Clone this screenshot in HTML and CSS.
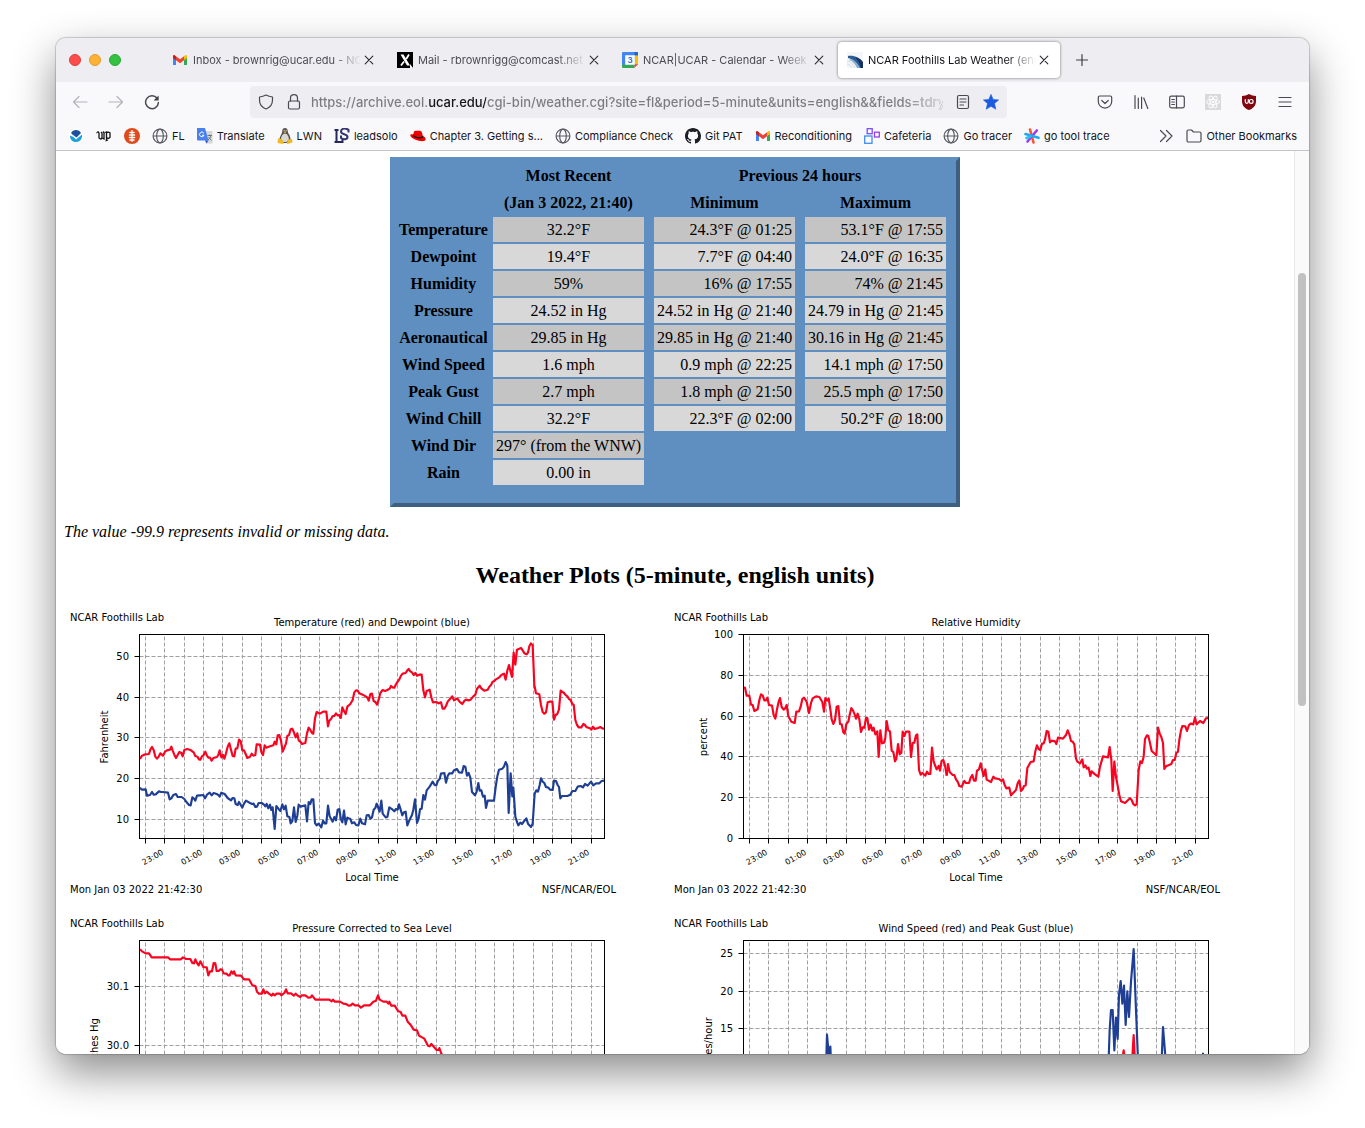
FILE: index.html
```html
<!DOCTYPE html>
<html lang="en">

<head>
    <meta charset="UTF-8" />
    <meta name="viewport" content="width=device-width, initial-scale=1.0" />
    <title>NCAR Foothills Lab Weather (english)</title>
    <link rel="stylesheet" href="styles.css">
</head>

<body>
    <!-- Icons used more than once -->
    <svg class="sprite" aria-hidden="true">
        <symbol id="gmail" viewBox="0 0 16 16">
            <path d="M1 4v9h3V7z" fill="#4285f4" />
            <path d="M15 4v9h-3V7z" fill="#34a853" />
            <path d="M12 4.2l1.2-1C14 2.6 15 3.2 15 4.2V6l-3 2.3z" fill="#fbbc04" />
            <path d="M4 4.2l-1.2-1C2 2.6 1 3.2 1 4.2V6l3 2.3z" fill="#c5221f" />
            <path d="M4 4.2l4 3 4-3v4.1l-4 3-4-3z" fill="#ea4335" />
        </symbol>
        <symbol id="globe" viewBox="0 0 16 16">
            <g fill="none" stroke="#5b5b66" stroke-width="1.2">
                <circle cx="8" cy="8" r="6.9" />
                <ellipse cx="8" cy="8" rx="3.3" ry="6.9" />
                <path d="M1 8h14" />
            </g>
        </symbol>
        <symbol id="close" viewBox="0 0 16 16">
            <path d="M4.2 4.2l7.6 7.6M11.8 4.2l-7.6 7.6" stroke="#2b2a33" stroke-width="1.1" stroke-linecap="round" />
        </symbol>
    </svg>

    <div class="window">
        <div class="tab-strip">
            <div class="lights">
                <span class="light red"></span>
                <span class="light yellow"></span>
                <span class="light green"></span>
            </div>
            <div class="tab">
                <svg class="icon"><use href="#gmail" /></svg>
                <span class="tab-title">Inbox - brownrig@ucar.edu - NCAR</span>
                <button class="tab-close" aria-label="Close tab"><svg class="icon"><use href="#close" /></svg></button>
            </div>
            <div class="tab">
                <svg class="icon" viewBox="0 0 16 16">
                    <path d="M0 0h16v16H0z" />
                    <path d="M3.5 2.5h3L13 13.5h-3z" fill="#fff" />
                    <path d="M12 2.5L9.2 7M7 9.5L4 13.5" stroke="#fff" stroke-width="1.8" />
                    <path d="M13 12l3 4h-3z" fill="#fff" />
                </svg>
                <span class="tab-title">Mail - rbrownrigg@comcast.net</span>
                <button class="tab-close" aria-label="Close tab"><svg class="icon"><use href="#close" /></svg></button>
            </div>
            <div class="tab">
                <svg class="icon" viewBox="0 0 16 16">
                    <path d="M1 0h14a1 1 0 0 1 1 1v12H0V1a1 1 0 0 1 1-1z" fill="#4285f4" />
                    <path d="M12.500 0H15a1 1 0 0 1 1 1v2.500h-3.500z" fill="#1967d2" />
                    <path d="M12.500 3.500H16v9h-3.500z" fill="#fbbc04" />
                    <path d="M0 12.500h12.500V16H1a1 1 0 0 1-1-1z" fill="#34a853" />
                    <path d="M12.500 12.500H16L12.500 16z" fill="#ea4335" />
                    <path d="M16 12.500V16h-3.500z" fill="#ededf0" />
                    <path d="M3.200 3.200h9.600v9.600H3.200z" fill="#fff" />
                    <text class="cal-day" x="8" y="11">3</text>
                </svg>
                <span class="tab-title">NCAR|UCAR - Calendar - Week of</span>
                <button class="tab-close" aria-label="Close tab"><svg class="icon"><use href="#close" /></svg></button>
            </div>
            <div class="tab active">
                <svg class="icon" viewBox="0 0 16 16">
                    <path d="M0 0h16v16H0z" fill="#f3f5f6" />
                    <path d="M1 4c6-1 12 2 15 6v6h-4C10 11 6 7 1 6z" fill="#2a5c96" />
                    <path d="M4 7c4 1 7 5 9 9h-3C8 12 6 9 2 8z" fill="#87add0" />
                    <path d="M8 5c4 1 7 3 8 6v5h-2c-1-4-3-8-6-11z" fill="#16305f" />
                    <path d="M0 9c3 0 6 3 8 7M0 12c2 0 4 2 5 4" fill="none" stroke="#cddbe8" />
                </svg>
                <span class="tab-title">NCAR Foothills Lab Weather (english</span>
                <button class="tab-close" aria-label="Close tab"><svg class="icon"><use href="#close" /></svg></button>
            </div>
            <button class="new-tab" aria-label="New tab">
                <svg class="icon" viewBox="0 0 16 16"><path d="M8 2.500v11M2.500 8h11" stroke="#3f3e48" stroke-width="1.2" stroke-linecap="round" /></svg>
            </button>
        </div>

        <div class="nav-bar">
            <button class="tool dim" aria-label="Back">
                <svg class="icon" viewBox="0 0 16 16"><path d="M15 8H1.500M7 2.500L1.500 8 7 13.500" /></svg>
            </button>
            <button class="tool dim" aria-label="Forward">
                <svg class="icon" viewBox="0 0 16 16"><path d="M1 8h13.500M9 2.500L14.500 8 9 13.500" /></svg>
            </button>
            <button class="tool" aria-label="Reload">
                <svg class="icon" viewBox="0 0 16 16">
                    <path d="M13.200 4.500A6.400 6.400 0 1 0 14.400 8.500" stroke-width="1.5" />
                    <path d="M14.600 1.500v5h-5z" fill="#3f3e48" stroke="none" />
                </svg>
            </button>
            <div class="url-bar">
                <svg class="icon line" viewBox="0 0 16 16"><path d="M8 1C6 2 3.500 2.700 1.500 3v3c0 4.500 2.500 7.500 6.500 9 4-1.500 6.500-4.500 6.500-9V3C12.500 2.700 10 2 8 1z" /></svg>
                <svg class="icon line lock" viewBox="0 0 16 16"><path d="M4.500 7V4.200a3.500 3.500 0 0 1 7 0V7" /><rect x="2.5" y="7" width="11" height="8" rx="1.5" /></svg>
                <input class="url" type="text" aria-label="Address" value="https://archive.eol.ucar.edu/cgi-bin/weather.cgi?site=fl&amp;period=5-minute&amp;units=english&amp;&amp;fields=tdry">
                <svg class="icon line" viewBox="0 0 16 16"><rect x="2.5" y="1.5" width="11" height="13" rx="1.5" /><path d="M5 5h6M5 8h6M5 11h3.500" /></svg>
                <svg class="icon" viewBox="0 0 16 16"><path d="M8 .4l2.200 5 5.400.5-4.100 3.600 1.300 5.700L8 12.300l-4.800 2.900 1.300-5.700L.4 5.900l5.400-.5z" fill="#1a5be0" stroke="#1a5be0" stroke-width=".6" stroke-linejoin="round" /></svg>
            </div>
            <button class="tool" aria-label="Save to Pocket">
                <svg class="icon" viewBox="0 0 16 16"><path d="M2.700 2h10.600c.8 0 1.400.6 1.400 1.400v4a6.700 6.700 0 0 1-13.400 0v-4C1.300 2.600 1.900 2 2.700 2zM4.800 6.500L8 9.500l3.200-3" /></svg>
            </button>
            <button class="tool" aria-label="Library">
                <svg class="icon" viewBox="0 0 16 16"><path d="M2 1.500v13M5.300 4v10.500M8.600 3v11.500M10.800 4l4 10.500" /></svg>
            </button>
            <button class="tool" aria-label="Sidebars">
                <svg class="icon" viewBox="0 0 16 16"><rect x=".7" y="2.2" width="14.6" height="11.6" rx="1.5" /><path d="M7.500 2.200v11.600M2.800 5.500h2.600M2.800 8h2.600M2.800 10.500h2.600" /></svg>
            </button>
            <button class="tool" aria-label="React Developer Tools">
                <svg class="icon" viewBox="0 0 16 16">
                    <path d="M0 0h16v16H0z" fill="#d9d9db" stroke="none" />
                    <g stroke="#fff" stroke-width=".9">
                        <ellipse cx="8" cy="8" rx="6.6" ry="2.5" />
                        <ellipse cx="8" cy="8" rx="6.6" ry="2.5" transform="rotate(60 8 8)" />
                        <ellipse cx="8" cy="8" rx="6.6" ry="2.5" transform="rotate(120 8 8)" />
                    </g>
                    <circle cx="8" cy="8" r="1.2" fill="#fff" stroke="none" />
                </svg>
            </button>
            <button class="tool" aria-label="uBlock Origin">
                <svg class="icon" viewBox="0 0 16 16">
                    <path d="M8 0C6 1.300 3.500 2 1 2v5c0 5 3 7.500 7 9 4-1.500 7-4 7-9V2C12.500 2 10 1.300 8 0z" fill="#800610" stroke="none" />
                    <path d="M4.300 5.500v2.300a1.500 1.500 0 0 0 3 0V5.500" stroke="#fff" />
                    <circle cx="10.2" cy="7.4" r="1.9" stroke="#fff" />
                </svg>
            </button>
            <button class="tool" aria-label="Menu">
                <svg class="icon" viewBox="0 0 16 16"><path d="M2 3.500h12M2 8h12M2 12.500h12" /></svg>
            </button>
        </div>

        <nav class="bookmarks">
            <a href="#" aria-label="NOAA">
                <svg class="icon" viewBox="0 0 16 16">
                    <circle cx="8" cy="8" r="7.5" fill="#fff" />
                    <path d="M3 5C4 3 6 2 8 2s4 1 5 3l-2 2-2.500 2.500L6.500 8 4.500 6.500z" fill="#1c4f9c" />
                    <path d="M2 7.500l3.500 1.500L8 11.500l6-5C14.500 11 12 14 8 14S2 11.500 2 7.500z" fill="#1ba1dc" />
                </svg>
            </a>
            <a href="#" aria-label="Washington Post">
                <svg class="icon" viewBox="0 0 16 16">
                    <path d="M1.500 3.500L3 5v5l1.500 1M5 4l1 1v5l-1.500 1.500M6 10l2 1V4.500L7 3.500M10.500 3.500v9.500M10.500 5L12 4l2 1v4.500l-1.500 1-2-1" fill="none" stroke="#111" stroke-width="1.3" />
                    <path d="M0 5.500l2-2M8.500 5l2-1.500M9.500 13l2.500-1" stroke="#111" />
                </svg>
            </a>
            <a href="#" aria-label="Tree">
                <svg class="icon" viewBox="0 0 16 16">
                    <circle cx="8" cy="8" r="8" fill="#de4a1b" />
                    <path d="M8 2.500v11" stroke="#fff" stroke-width="1.2" stroke-linecap="round" />
                    <path d="M6 4.500h4M5.500 7h5M5.500 9.500h5M6 12h4" stroke="#fff" stroke-width="1.6" stroke-linecap="round" />
                </svg>
            </a>
            <a href="#"><svg class="icon"><use href="#globe" /></svg>FL</a>
            <a href="#">
                <svg class="icon" viewBox="0 0 16 16">
                    <path d="M6 3h9.500v12.500H9z" fill="#d8d8d8" />
                    <path d="M0 0h8l3.500 12.500H1A1 1 0 0 1 0 11.500z" fill="#4a80ee" />
                    <path d="M8 12.500h3.500L9.500 15.500z" fill="#2a56c6" />
                    <path d="M6.800 5.200A2.300 2.300 0 1 0 7 7.300H5" fill="none" stroke="#fff" />
                    <path d="M10.500 7.500h4.500M12.700 6.500v1M14 7.500c-.5 2-1.500 3-3 4.500M11.500 9l3 3.500" fill="none" stroke="#587078" stroke-width=".9" />
                </svg>Translate</a>
            <a href="#">
                <svg class="icon" viewBox="0 0 16 16">
                    <path d="M8 0c2 0 2.800 1.500 2.800 3.500 0 2 3 4 2.700 8.500l-2.500 3H5l-2.500-3C2.500 8 5.200 6 5.200 3.500 5.200 1.500 6 0 8 0z" fill="#55534f" />
                    <path d="M8 5.500c2 0 4 3 3.800 6L9.500 14h-3L4 11c0-2.500 2-5.500 4-5.500z" fill="#d9d7d0" />
                    <path d="M6.200 3.500h3.500L8 5.200zM1 10.500l3.500.5 2.500 4-1 1L.5 15zM15 11l-3.500.5-2 3.500 1 1 5-1.500z" fill="#f1b922" />
                    <path d="M6.700 2.300h.8M8.800 2.300h.8" stroke="#fff" />
                </svg>LWN</a>
            <a href="#">
                <svg class="icon" viewBox="0 0 16 16">
                    <path d="M.5 2h4M2.500 2v12M.5 14h8v-3" fill="none" stroke="#26285c" stroke-width="2" />
                    <path d="M14.500 4.500V1.800L13 1c-3-1-6 0-6 2.500C7 7 13.500 5.500 13.500 9c0 2.500-4 3-6.500 1V7.500" fill="none" stroke="#34366e" stroke-width="2" />
                </svg>leadsolo</a>
            <a href="#">
                <svg class="icon" viewBox="0 0 16 16">
                    <path d="M4 3.500C5 2 6.500 3 8 2.800c2-.3 3.500 0 4 2l.8 3c3 1.500 4 4.500 1 5.200-4 .8-11-1.500-13-4.500C-.5 6.500 1 6 3.200 6.500z" fill="#e00" />
                    <path d="M3.200 6.500c1.500 2.300 7 3.700 9.600 1.600l.3 1.300C10.500 11.500 4.500 10.300 2.900 8z" fill="#1a0000" />
                </svg>Chapter 3. Getting s...</a>
            <a href="#"><svg class="icon"><use href="#globe" /></svg>Compliance Check</a>
            <a href="#">
                <svg class="icon" viewBox="0 0 16 16">
                    <path fill-rule="evenodd" d="M8 0C3.580 0 0 3.580 0 8c0 3.540 2.290 6.530 5.470 7.590.4.070.55-.17.55-.38 0-.19-.01-.82-.01-1.490-2.010.37-2.530-.49-2.690-.94-.09-.23-.48-.94-.82-1.130-.28-.15-.68-.52-.01-.53.63-.01 1.080.58 1.230.82.72 1.210 1.870.87 2.330.66.07-.52.28-.87.51-1.070-1.780-.2-3.640-.89-3.640-3.950 0-.87.31-1.590.82-2.150-.08-.2-.36-1.020.08-2.120 0 0 .67-.21 2.200.82.64-.18 1.320-.27 2-.27s1.360.09 2 .27c1.530-1.040 2.200-.82 2.200-.82.44 1.100.16 1.920.08 2.120.51.56.82 1.270.82 2.150 0 3.070-1.870 3.750-3.650 3.950.29.25.54.73.54 1.480 0 1.070-.01 1.930-.01 2.200 0 .21.15.46.55.38A8.010 8.010 0 0 0 16 8c0-4.420-3.580-8-8-8z" fill="#1b1f23" />
                </svg>Git PAT</a>
            <a href="#"><svg class="icon"><use href="#gmail" /></svg>Reconditioning</a>
            <a href="#">
                <svg class="icon" viewBox="0 0 16 16">
                    <g fill="none" stroke-width="1.3">
                        <rect x="3.2" y=".7" width="5" height="5" stroke="#7a4df3" />
                        <rect x="10.5" y="4.2" width="4.8" height="4.8" stroke="#9a3df5" />
                        <rect x=".7" y="8" width="7.3" height="7.3" stroke="#3f8df0" />
                    </g>
                </svg>Cafeteria</a>
            <a href="#"><svg class="icon"><use href="#globe" /></svg>Go tracer</a>
            <a href="#">
                <svg class="icon" viewBox="0 0 16 16">
                    <g stroke-width="2.6" stroke-linecap="round">
                        <path d="M6 1.500L9.500 14.500" stroke="#f9542c" />
                        <path d="M12.800 2.500L3.500 13.500" stroke="#a436f2" />
                        <path d="M1.500 6l13 3.800" stroke="#22a7f2" />
                        <path d="M2.500 10l4-1.500" stroke="#22c4e8" />
                    </g>
                </svg>go tool trace</a>
            <button class="more" aria-label="More bookmarks">
                <svg class="icon line" viewBox="0 0 16 16"><path d="M2.500 2.500L8 8l-5.500 5.500M8.500 2.500L14 8l-5.500 5.500" /></svg>
            </button>
            <a href="#">
                <svg class="icon line" viewBox="0 0 16 16"><path d="M1 3.500C1 2.700 1.600 2 2.500 2h3l2 2h6c.8 0 1.500.7 1.500 1.500v7c0 .8-.7 1.500-1.500 1.500h-11C1.600 14 1 13.300 1 12.500z" /></svg>Other Bookmarks</a>
        </nav>

        <div class="viewport">
            <main class="page">
                <table class="weather">
                    <colgroup>
                        <col class="col-label"><col class="col-recent"><col class="col-gap">
                        <col class="col-range"><col class="col-gap"><col class="col-range"><col class="col-gap">
                    </colgroup>
                    <thead>
                        <tr><td></td><th>Most Recent</th><td></td><th colspan="3">Previous 24 hours</th><td></td></tr>
                        <tr><td></td><th>(Jan 3 2022, 21:40)</th><td></td><th>Minimum</th><td></td><th>Maximum</th><td></td></tr>
                    </thead>
                    <tbody>
                        <tr><th>Temperature</th><td class="now">32.2°F</td><td></td><td class="range">24.3°F @ 01:25</td><td></td><td class="range">53.1°F @ 17:55</td><td></td></tr>
                        <tr><th>Dewpoint</th><td class="now">19.4°F</td><td></td><td class="range">7.7°F @ 04:40</td><td></td><td class="range">24.0°F @ 16:35</td><td></td></tr>
                        <tr><th>Humidity</th><td class="now">59%</td><td></td><td class="range">16% @ 17:55</td><td></td><td class="range">74% @ 21:45</td><td></td></tr>
                        <tr><th>Pressure</th><td class="now">24.52 in Hg</td><td></td><td class="range">24.52 in Hg @ 21:40</td><td></td><td class="range">24.79 in Hg @ 21:45</td><td></td></tr>
                        <tr><th>Aeronautical</th><td class="now">29.85 in Hg</td><td></td><td class="range">29.85 in Hg @ 21:40</td><td></td><td class="range">30.16 in Hg @ 21:45</td><td></td></tr>
                        <tr><th>Wind Speed</th><td class="now">1.6 mph</td><td></td><td class="range">0.9 mph @ 22:25</td><td></td><td class="range">14.1 mph @ 17:50</td><td></td></tr>
                        <tr><th>Peak Gust</th><td class="now">2.7 mph</td><td></td><td class="range">1.8 mph @ 21:50</td><td></td><td class="range">25.5 mph @ 17:50</td><td></td></tr>
                        <tr><th>Wind Chill</th><td class="now">32.2°F</td><td></td><td class="range">22.3°F @ 02:00</td><td></td><td class="range">50.2°F @ 18:00</td><td></td></tr>
                        <tr><th>Wind Dir</th><td class="now">297° (from the WNW)</td><td colspan="5"></td></tr>
                        <tr><th>Rain</th><td class="now">0.00 in</td><td colspan="5"></td></tr>
                    </tbody>
                </table>

                <p class="note">The value -99.9 represents invalid or missing data.</p>
                <h2>Weather Plots (5-minute, english units)</h2>
                <div class="plots" id="plots"></div>
            </main>
            <div class="scrollbar"><div class="thumb"></div></div>
        </div>
    </div>

    <script src="plots.js"></script>
</body>

</html>
```

FILE: styles.css
```css
* {
    box-sizing: border-box;
}

body {
    margin: 0;
    padding: 38px 56px 74px;
    background-color: #ffffff;
}

button {
    border: 0;
    padding: 0;
    background: none;
    display: flex;
    align-items: center;
    justify-content: center;
}

.sprite {
    display: none;
}

.icon {
    width: 16px;
    height: 16px;
    flex: none;
}

.line {
    fill: none;
    stroke: #4a4953;
    stroke-width: 1.2;
    stroke-linejoin: round;
    stroke-linecap: round;
}

/* Window frame */
.window {
    display: flex;
    flex-direction: column;
    height: calc(100vh - 112px);
    border-radius: 10px;
    overflow: hidden;
    background-color: #f9f9fb;
    font-family: Inter, "Liberation Sans", sans-serif;
    font-size: 11px;
    color: #15141a;
    box-shadow: 0 0 1px 1px rgba(0, 0, 0, 0.18), 0 18px 44px rgba(0, 0, 0, 0.46);
}

.tab-strip {
    display: flex;
    align-items: center;
    height: 44px;
    flex: none;
    background-color: #eeedf2;
}

.lights {
    display: flex;
    gap: 8px;
    width: 107px;
    padding-left: 13px;
}

.light {
    width: 12px;
    height: 12px;
    border-radius: 50%;
}

.light.red {
    background-color: #fc4e4b;
    border: 1px solid #e03c3c;
}

.light.yellow {
    background-color: #fdb135;
    border: 1px solid #e09c2c;
}

.light.green {
    background-color: #34c240;
    border: 1px solid #2aa934;
}

.tab {
    display: flex;
    align-items: center;
    width: 222px;
    height: 36px;
    margin-right: 3px;
    padding: 0 8px 0 9px;
    border-radius: 4px;
    color: #4c4b55;
}

.tab.active {
    background-color: #ffffff;
    color: #15141a;
    box-shadow: 0 0 3px rgba(0, 0, 0, 0.55);
}

.tab-title {
    flex: 1;
    margin-left: 5px;
    overflow: hidden;
    white-space: nowrap;
    line-height: 20px;
    mask-image: linear-gradient(to left, transparent, #000000 28px);
}

.cal-day {
    font-size: 8px;
    font-weight: 700;
    text-anchor: middle;
    fill: #2f6fe0;
}

.new-tab {
    width: 38px;
    height: 36px;
}

/* Navigation */
.nav-bar {
    display: flex;
    align-items: center;
    height: 40px;
    flex: none;
    padding: 0 6px;
}

.tool {
    width: 36px;
    height: 32px;
}

.tool svg {
    fill: none;
    stroke: #4a4953;
    stroke-width: 1.2;
    stroke-linecap: round;
    stroke-linejoin: round;
}

.tool.dim svg {
    stroke: #b4b3b9;
}

.url-bar {
    display: flex;
    align-items: center;
    flex: 1;
    gap: 12px;
    height: 32px;
    margin: 0 80px;
    padding: 0 8px;
    border-radius: 4px;
    background-color: #eeedf2;
}

.lock {
    margin-right: -3px;
}

.url {
    flex: 1;
    min-width: 0;
    border: 0;
    padding: 0;
    font-family: inherit;
    font-size: 13px;
    font-weight: 500;
    line-height: 20px;
    color: transparent;
    /* host name darker than the rest, fading out at the right */
    background: linear-gradient(to left, transparent, transparent 2px, #7b7b82 40px, #7b7b82 calc(100% - 176px), #15141a calc(100% - 176px));
    background: linear-gradient(to left, #eeedf2, transparent 40px),
        linear-gradient(to right, #7b7b82 118px, #15141a 118px, #15141a 175px, #7b7b82 175px);
    background-clip: text;
}

/* Bookmarks toolbar */
.bookmarks {
    display: flex;
    align-items: center;
    gap: 12px;
    height: 29px;
    flex: none;
    padding: 0 12px;
    border-bottom: 1px solid #c4c4c6;
}

.bookmarks a {
    display: flex;
    align-items: center;
    gap: 4px;
    color: inherit;
    text-decoration: none;
    white-space: nowrap;
}

.more {
    margin-left: auto;
}

/* Web page */
.viewport {
    display: flex;
    flex: 1;
    min-height: 0;
    background-color: #ffffff;
}

.page {
    flex: 1;
    padding: 6px 8px 0;
    overflow: hidden;
    font-family: "Liberation Serif", "Times New Roman", serif;
    font-size: 16px;
    color: #000000;
}

.scrollbar {
    width: 15px;
    padding: 122px 3px 0;
    background-color: #fafafa;
    border-left: 1px solid #e8e8e8;
}

.thumb {
    width: 8px;
    height: 433px;
    border-radius: 4px;
    background-color: #c1c1c1;
}

.weather {
    width: 570px;
    margin: 0 auto;
    table-layout: fixed;
    border-collapse: separate;
    border-spacing: 2px;
    border: 4px solid #5f8fc1;
    border-right-color: #3f5f81;
    border-bottom-color: #3f5f81;
    padding-bottom: 16px;
    background-color: #5f8fc1;
}

.weather tr {
    height: 25px;
}

.weather th,
.weather td {
    padding: 0 3px;
    line-height: 25px;
    white-space: nowrap;
}

.weather td:empty {
    padding: 0;
}

.col-label {
    width: 95px;
}

.col-recent {
    width: 151px;
}

.col-gap {
    width: 6px;
}

.col-range {
    width: 141px;
}

.now {
    text-align: center;
}

.range {
    text-align: right;
}

.now,
.range {
    background-color: #c4c4c4;
}

tr:nth-child(even) .now,
tr:nth-child(even) .range {
    background-color: #d8d8d8;
}

.note {
    margin: 16px 0 20px;
    line-height: 18px;
    font-style: italic;
}

h2 {
    margin: 0 0 15px;
    font-size: 24px;
    line-height: 28px;
    text-align: center;
}

.plots {
    display: flex;
    flex-wrap: wrap;
    gap: 6px 4px;
}

.plot {
    width: 600px;
    height: 300px;
    font-family: "DejaVu Sans", sans-serif;
    font-size: 10px;
    fill: #000000;
}

.plot .frame,
.plot .tick {
    fill: none;
    stroke: #000000;
}

.plot .grid {
    stroke: #a0a0a0;
    stroke-dasharray: 4 2;
}

.plot .hour {
    font-size: 8px;
}

.plot polyline {
    fill: none;
    stroke-width: 6.5;
    stroke-linejoin: round;
}

.plot .red {
    stroke: #fa0320;
}

.plot .blue {
    stroke: #1f3f95;
}
```

FILE: plots.js
```js
// Plot area inside the 600x300 image
const LEFT = 75.5, RIGHT = 540.5, TOP = 30.5, BOTTOM = 234.5;
const HOURS = ["23:00", "01:00", "03:00", "05:00", "07:00", "09:00", "11:00", "13:00", "15:00", "17:00", "19:00", "21:00"];

// Trace points are in thirds of a pixel, "at" is the pixel offset of each run
const plots = [
    {
        title: "Temperature (red) and Dewpoint (blue)",
        unit: "Fahrenheit", unitX: 41,
        ticks: [[50, 52.5], [40, 93.5], [30, 133.5], [20, 174.5], [10, 215.5]],
        traces: [
            { color: "red", at: [-4, 1], points: "240,462 246,452 256,448 267,447 271,434 276,426 281,435 286,455 291,461 296,455 301,445 309,452 315,440 321,436 330,434 334,425 338,437 343,449 348,459 353,450 358,441 364,444 368,454 373,435 382,432 393,436 401,442 406,453 412,455 417,463 421,464 426,454 431,450 436,440 441,452 445,458 450,458 455,467 460,459 471,456 475,450 479,436 484,457 489,450 493,461 498,445 503,425 508,415 513,434 518,453 523,454 527,431 532,430 537,404 542,408 547,436 552,436 557,447 562,459 570,455 575,446 580,452 586,450 590,418 600,419 604,441 609,450 614,421 619,428 630,424 640,421 644,410 649,418 653,391 658,390 663,407 668,440 673,428 678,415 682,393 687,390 692,373 697,371 702,383 707,397 712,385 716,406 721,410 726,417 736,414 741,385 746,368 751,375 756,384 760,386 765,340 770,321 780,326 790,320 799,320 804,364 808,347 813,342 818,333 823,333 828,325 833,331 838,330 842,341" },
            { color: "red", at: [276, 1], points: "2,341 7,307 12,318 17,327 22,305 31,297 38,285 43,262 48,256 53,257 58,265 68,269 77,274 82,278 86,287 91,267 96,266 101,288 106,291 111,299 116,284 121,264 128,255 135,258 142,255 149,251 153,243 158,247 163,248 168,238 173,230 178,223 183,212 188,206 197,204 202,196 206,192 211,199 216,202 221,210 226,204 231,212 238,209 245,209 250,256 255,277 260,258 269,254 274,277 279,292 289,291 296,295 303,292 308,311 313,311 318,303 323,290 328,284 337,274 342,286 347,283 352,280 357,288 362,293 367,297 372,289 377,284 387,286 392,284 400,274 406,269 411,251 419,242 424,250 433,257 443,254 448,245 453,240 458,230 463,228 468,223 478,217 485,209 492,206 497,224 502,197 507,180 511,197 516,216 521,143 526,179 531,134 543,129 548,136 553,145 560,148 564,143 568,124 573,115 578,121 583,240 588,265 598,268 603,300 608,321 613,326 618,322 623,292 630,290 637,290 642,344 647,330 652,327 657,313 662,257 672,264 677,270 682,274 687,282 692,285 697,297 701,299 706,345 711,360 716,367 724,367 730,357 735,360 740,367 750,370 754,374 759,365 764,372 774,369 781,366 787,370 793,371" },
            { color: "blue", at: [-4, 1], points: "240,548 245,554 257,553 261,572 270,570 276,561 281,569 287,568 297,559 303,561 308,561 324,563 329,583 334,580 340,570 348,567 353,576 365,576 373,582 380,592 387,600 392,601 397,577 402,581 406,587 411,572 421,571 430,570 435,580 441,569 449,563 455,571 461,564 470,567 474,569 479,575 484,563 494,567 503,579 513,586 518,579 523,580 527,597 533,600 537,591 547,608 552,596 558,587 563,590 570,594 576,597 581,596 586,606 591,605 596,594 605,594 612,599 616,604 620,597 625,610 630,599 634,615 638,607 644,672 649,603 655,611 661,618 667,598 672,613 677,602 682,634 688,636 692,655 697,648 702,607 707,651 712,632 716,599 721,605 736,601 741,649 746,591 751,597 755,583 760,583 765,654 770,661 776,656 784,667 789,647 794,655 799,655 804,602 809,634 813,641 818,650 823,636 828,646 833,614 838,612 843,645" },
            { color: "blue", at: [276, 1], points: "3,645 7,652 12,617 17,658 22,638 31,642 36,655 43,652 48,660 55,661 61,641 66,655 75,658 80,631 86,630 91,641 96,637 101,614 106,609 110,596 115,609 119,620 124,587 128,626 137,637 142,636 148,607 158,614 163,619 168,612 173,614 177,598 182,614 187,631 192,622 197,620 202,661 207,648 216,630 220,614 225,583 231,654 236,640 240,613 245,611 250,570 255,584 260,556 269,545 278,530 284,540 289,541 294,527 299,522 303,506 313,504 318,533 323,513 328,505 337,505 342,496 351,492 357,502 366,503 371,483 376,485 381,512 386,504 391,518 396,561 405,571 410,560 415,534 419,557 424,556 429,575 434,572 438,609 443,587 462,587 467,546 472,514 477,494 487,491 492,485 497,471 502,482 506,624 512,505 517,574 520,548 526,635 531,651 535,661 541,653 546,657 554,646 559,640 564,656 573,666 578,656 584,566 589,556 594,560 599,540 603,520 608,530 613,534 618,546 625,548 630,554 638,555 642,527 648,528 653,540 657,546 661,580 666,573 682,573 691,569 697,558 706,558 713,545 722,543 729,547 735,537 743,542 753,530 760,541 768,535 778,535 785,528 793,527" }
        ]
    },
    {
        title: "Relative Humidity",
        unit: "percent", unitX: 36,
        ticks: [[100, 30.5], [80, 71.5], [60, 112.5], [40, 152.5], [20, 193.5], [0, 234.5]],
        traces: [
            { color: "red", at: [-4, 1], points: "240,247 243,248 248,272 256,272 261,299 266,300 271,318 281,313 286,285 291,268 296,271 301,286 306,286 310,278 315,300 324,302 329,330 334,341 339,313 344,290 348,279 353,306 359,314 364,309 368,300 373,334 382,350 392,354 397,320 405,319 410,305 415,282 420,278 428,290 435,324 441,294 446,280 456,274 466,276 475,291 480,320 484,279 489,287 494,280 499,313 503,343 508,357 513,345 518,305 523,303 528,357 533,358 538,382 542,386 547,357 553,350 557,330 562,309 567,317 572,328 576,341 581,326 586,343 591,381 596,367 601,368 606,339 610,339 615,374 620,359 625,377 629,368 634,388 640,379 644,456 649,376 654,415 660,413 664,398 668,348 673,376 678,379 683,437 688,441 693,469 697,462 702,417 707,448 712,443 716,380 721,393 726,380 736,380 741,456 746,414 751,413 756,391 760,388 765,495 770,509 775,504 784,512 789,500 794,507 799,507 804,428 809,470 814,483 818,493 824,483 828,497 833,467 838,465 843,481 848,512" },
            { color: "red", at: [276, 1], points: "8,512 12,477 17,501 26,510 31,510 36,523 41,530 46,543 53,545 61,528 66,534 75,534 80,518 85,510 90,527 95,527 99,497 105,493 110,475 115,497 119,513 124,493 128,524 141,531 148,515 153,520 165,522 172,528 177,523 182,540 187,550 196,548 201,571 211,560 216,555 221,535 226,526 231,558 236,553 240,543 245,541 250,489 260,471 269,469 274,439 279,421 284,432 289,435 294,416 299,415 303,404 308,378 313,380 318,412 323,407 333,409 337,417 342,398 357,401 366,390 371,376 376,388 381,408 386,410 391,418 396,461 400,470 408,475 415,463 419,487 424,481 429,491 434,488 439,513 443,499 453,508 463,515 468,485 477,454 492,457 497,426 502,465 506,558 511,470 516,516 521,542 526,570 531,589 543,594 558,580 563,585 568,597 573,601 578,598 584,495 589,469 594,474 599,455 603,402 609,391 613,393 618,414 623,438 633,447 637,451 642,368 647,385 652,396 657,414 661,492 666,484 677,479 682,477 687,465 692,465 697,444 702,440 706,405 711,376 715,363 724,364 729,378 735,360 740,356 748,358 753,338 758,358 768,348 778,354 786,340 793,339" }
        ]
    },
    {
        title: "Pressure Corrected to Sea Level",
        unit: "Inches Hg", unitX: 31,
        ticks: [["30.1", 76.5], ["30.0", 135.5], ["29.9", 194.5]],
        traces: [
            { color: "red", at: [-14, -5], points: "270,133 276,139 287,145 297,145 305,157 354,157 360,163 392,163 399,157 408,162 421,162 427,174 432,175 436,163 441,174 446,181 451,169 460,186 470,187 475,211 480,199 486,199 491,174 496,175 500,198 506,198 511,193 516,194 521,205 529,206 535,211 539,211 544,199 549,206 552,199 557,211 573,212 582,223 597,223 607,241 616,243 621,260 627,266 636,266 640,253 645,265 650,260 657,266 665,272 669,266 674,271 680,266 690,266 694,271 703,264 708,253 713,265 723,265 732,272 737,266 742,271 751,276 755,271 766,271 775,278 782,277 786,271 796,284 838,284 845,289 849,284 855,290 870,290 880,296 888,297 896,302 902,301 908,296 915,301 925,301 933,308 942,301 960,301 970,290 978,287 984,271 989,284 1000,290 1010,290 1015,296 1018,290 1024,302 1034,302 1045,319 1052,321 1057,332 1066,332 1073,350 1083,361 1091,374 1101,376 1107,392 1123,401 1134,422 1139,424 1144,417 1160,435 1166,435 1168,429 1174,446 1190,470" }
        ]
    },
    {
        title: "Wind Speed (red) and Peak Gust (blue)",
        unit: "Miles/hour", unitX: 41,
        ticks: [[25, 43.5], [20, 81.5], [15, 118.5], [10, 156.5], [5, 194.5]],
        traces: [
            { color: "blue", at: [-4, -5], points: "486,490 489,389 494,446 499,425 502,490" },
            { color: "blue", at: [372, -5], points: "205,490 209,375 213,315 218,315 223,436 228,338 233,402 237,270 242,228 247,296 252,242 257,360 262,259 267,336 273,230 281,132 287,290 295,490" },
            { color: "blue", at: [372, -5], points: "364,490 369,366 379,490 487,490 489,446 491,490" },
            { color: "red", at: [372, -5], points: "243,490 251,436 257,490 275,490 281,390 286,490" }
        ]
    }
];

function text(x, y, str, anchor = "start", extra = "") {
    return `<text x="${x}" y="${y}" text-anchor="${anchor}" ${extra}>${str}</text>`;
}

function drawPlot(p) {
    let out = "";

    // Hourly grid, a label on every other line
    for (let i = 0; i < 24; i++) {
        const x = Math.floor(81.4 + i * 19.39) + 0.5;
        out += `<path class="grid" d="M${x} ${BOTTOM}V${TOP}"/><path class="tick" d="M${x} ${BOTTOM}v5"/>`;
        if (i % 2 === 0) {
            out += text(x + 7, 256, HOURS[i / 2], "middle", `class="hour" transform="rotate(-30 ${x + 7} 253)"`);
        }
    }
    p.ticks.forEach(([label, y]) => {
        out += `<path class="grid" d="M${LEFT} ${y}H${RIGHT}"/><path class="tick" d="M${LEFT} ${y}h-5"/>`;
        out += text(65, y + 3.5, label, "end");
    });

    p.traces.forEach(t => {
        out += `<polyline class="${t.color}" transform="translate(${t.at}) scale(0.33333)" points="${t.points}"/>`;
    });

    out += `<rect class="frame" x="${LEFT}" y="${TOP}" width="${RIGHT - LEFT}" height="${BOTTOM - TOP}"/>`;
    out += text(6, 17, "NCAR Foothills Lab");
    out += text(308, 22, p.title, "middle");
    out += text(308, 277, "Local Time", "middle");
    out += text(6, 289, "Mon Jan 03 2022 21:42:30");
    out += text(552, 289, "NSF/NCAR/EOL", "end");
    out += text(p.unitX, 136, p.unit, "middle", `transform="rotate(-90 ${p.unitX} 133)"`);

    return `<svg class="plot" viewBox="0 0 600 300" role="img" aria-label="${p.title}">${out}</svg>`;
}

document.getElementById("plots").innerHTML = plots.map(drawPlot).join("");
```
